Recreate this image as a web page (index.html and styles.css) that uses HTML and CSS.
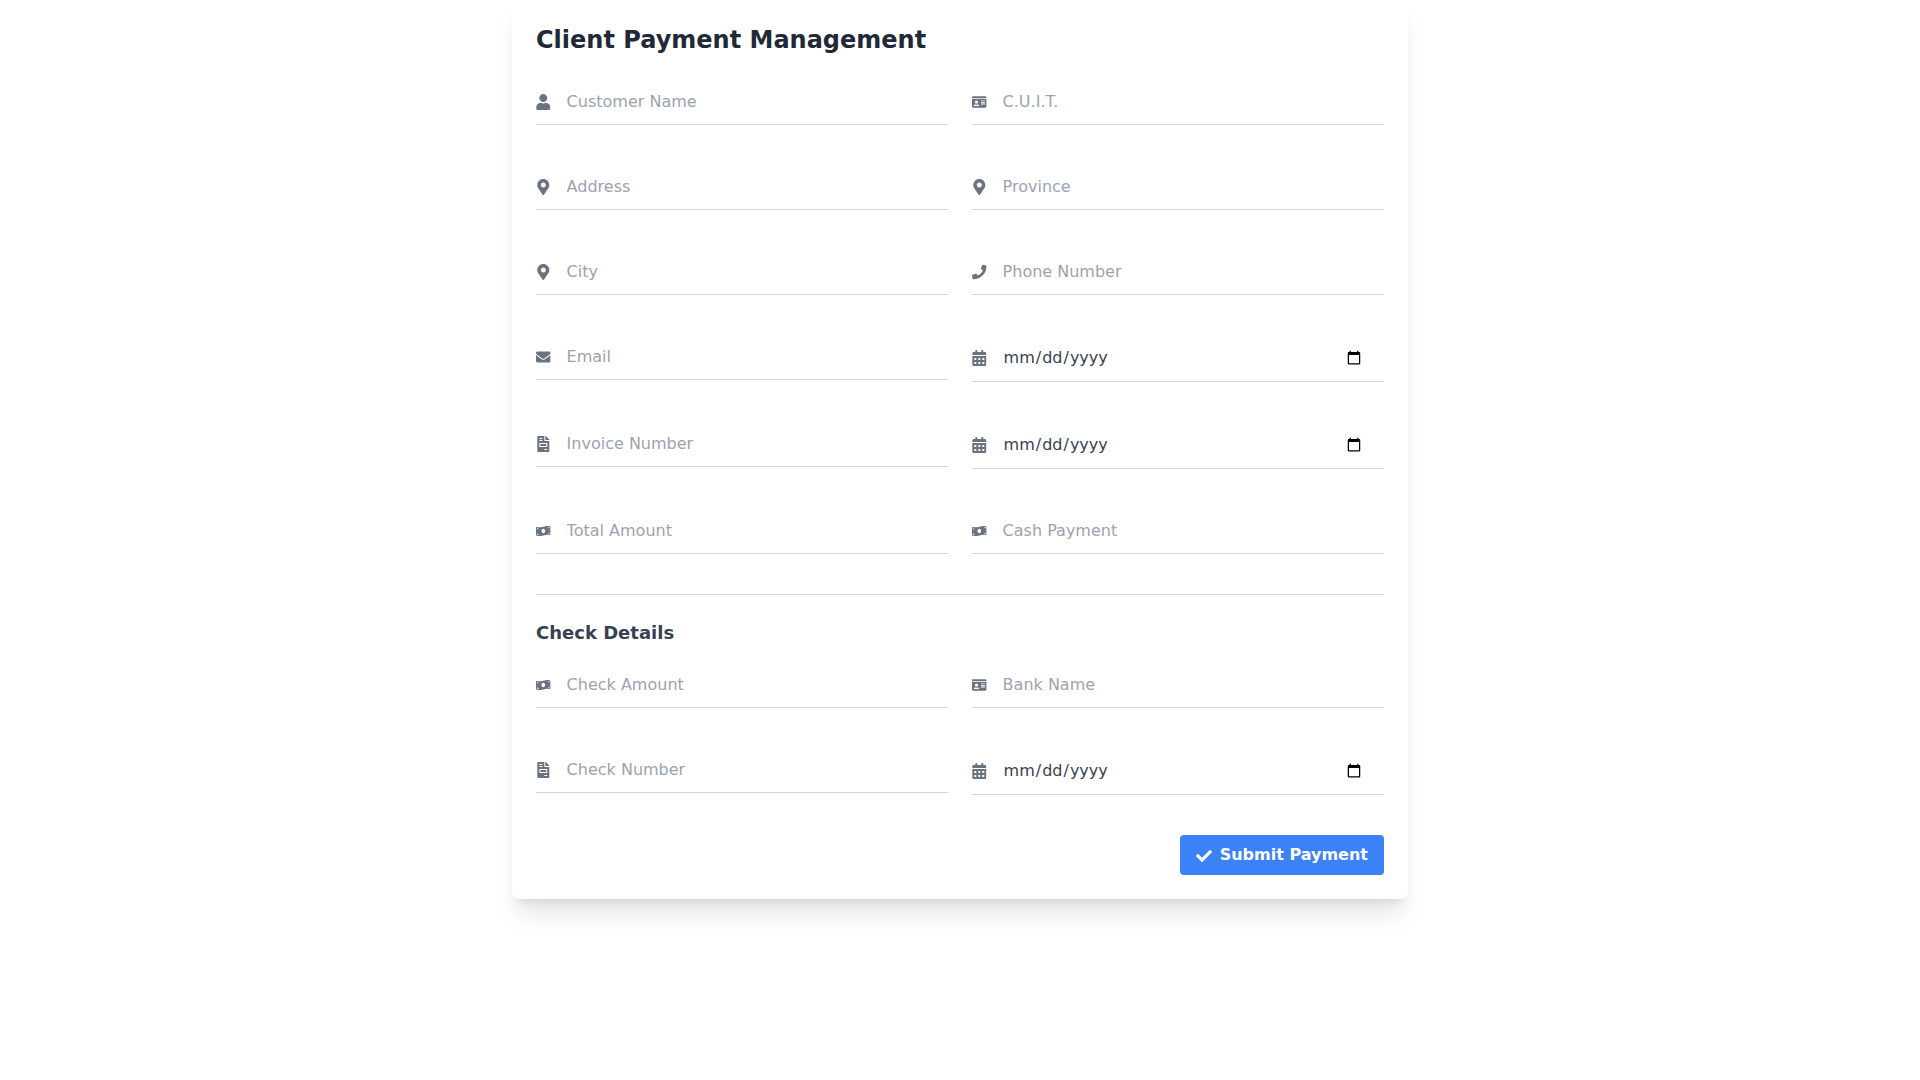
FILE: index.html
```
<!doctype html>
<html lang="en">
  <head>
    <meta charset="utf-8">
    <meta name="viewport" content="width=device-width, initial-scale=1">
    <title>Client Payment Management</title>
    <link rel="stylesheet" href="styles.css">
  </head>

  <body>
    <svg class="sprite" aria-hidden="true">
      <symbol id="user" viewBox="0 0 448 512"><path d="M224 256c70.7 0 128-57.3 128-128S294.7 0 224 0 96 57.3 96 128s57.3 128 128 128zm89.6 32h-16.7c-22.2 10.2-46.9 16-72.9 16s-50.6-5.8-72.9-16h-16.7C60.2 288 0 348.2 0 422.4V464c0 26.5 21.5 48 48 48h352c26.5 0 48-21.5 48-48v-41.6c0-74.2-60.2-134.4-134.4-134.4z"/></symbol>
      <symbol id="idCard" viewBox="0 0 576 512"><path d="M528 32H48C21.5 32 0 53.5 0 80v16h576V80c0-26.5-21.5-48-48-48zM0 432c0 26.5 21.5 48 48 48h480c26.5 0 48-21.5 48-48V128H0v304zm352-232c0-4.4 3.6-8 8-8h144c4.4 0 8 3.6 8 8v16c0 4.4-3.6 8-8 8H360c-4.4 0-8-3.6-8-8v-16zm0 64c0-4.4 3.6-8 8-8h144c4.4 0 8 3.6 8 8v16c0 4.4-3.6 8-8 8H360c-4.4 0-8-3.6-8-8v-16zm0 64c0-4.4 3.6-8 8-8h144c4.4 0 8 3.6 8 8v16c0 4.4-3.6 8-8 8H360c-4.4 0-8-3.6-8-8v-16zM176 192c35.3 0 64 28.7 64 64s-28.7 64-64 64-64-28.7-64-64 28.7-64 64-64zM67.1 396.2C75.5 370.5 99.6 352 128 352h8.2c12.3 5.1 25.7 8 39.8 8s27.6-2.9 39.8-8h8.2c28.4 0 52.5 18.5 60.9 44.2 3.2 9.9-5.2 19.8-15.6 19.8H82.7c-10.4 0-18.8-10-15.6-19.8z"/></symbol>
      <symbol id="marker" viewBox="0 0 384 512"><path d="M172.268 501.67C26.97 291.031 0 269.413 0 192 0 85.961 85.961 0 192 0s192 85.961 192 192c0 77.413-26.97 99.031-172.268 309.67-9.535 13.774-29.93 13.773-39.464 0zM192 272c44.183 0 80-35.817 80-80s-35.817-80-80-80-80 35.817-80 80 35.817 80 80 80z"/></symbol>
      <symbol id="phone" viewBox="0 0 512 512"><path d="M493.4 24.6l-104-24c-11.3-2.6-22.9 3.3-27.5 13.9l-48 112c-4.2 9.8-1.4 21.3 6.9 28l60.6 49.6c-36 76.7-98.9 140.5-177.2 177.2l-49.6-60.6c-6.8-8.3-18.2-11.1-28-6.9l-112 48C3.9 366.5-2 378.1.6 389.4l24 104C27.1 504.2 36.7 512 48 512c256.1 0 464-207.5 464-464 0-11.2-7.7-20.9-18.6-23.4z"/></symbol>
      <symbol id="envelope" viewBox="0 0 512 512"><path d="M502.3 190.8c3.9-3.1 9.7-.2 9.7 4.7V400c0 26.5-21.5 48-48 48H48c-26.5 0-48-21.5-48-48V195.6c0-5 5.7-7.8 9.7-4.7 22.4 17.4 52.1 39.5 154.1 113.6 21.1 15.4 56.7 47.8 92.2 47.6 35.7.3 72-32.8 92.3-47.6 102-74.1 131.6-96.3 154-113.7zM256 320c23.2.4 56.6-29.2 73.4-41.4 132.7-96.3 142.8-104.7 173.4-128.7 5.8-4.5 9.2-11.5 9.2-18.9v-19c0-26.5-21.5-48-48-48H48c-26.5 0-48 21.5-48 48v19c0 7.4 3.4 14.3 9.2 18.9 30.6 23.9 40.7 32.4 173.4 128.7 16.8 12.2 50.2 41.8 73.4 41.4z"/></symbol>
      <symbol id="calendar" viewBox="0 0 448 512"><path d="M0 464c0 26.5 21.5 48 48 48h352c26.5 0 48-21.5 48-48V192H0v272zm320-196c0-6.600 5.400-12 12-12h40c6.600 0 12 5.400 12 12v40c0 6.600-5.400 12-12 12h-40c-6.600 0-12-5.400-12-12v-40zm0 128c0-6.600 5.400-12 12-12h40c6.600 0 12 5.400 12 12v40c0 6.600-5.400 12-12 12h-40c-6.600 0-12-5.400-12-12v-40zM192 268c0-6.600 5.400-12 12-12h40c6.600 0 12 5.400 12 12v40c0 6.600-5.400 12-12 12h-40c-6.600 0-12-5.400-12-12v-40zm0 128c0-6.600 5.400-12 12-12h40c6.600 0 12 5.400 12 12v40c0 6.600-5.400 12-12 12h-40c-6.600 0-12-5.400-12-12v-40zM64 268c0-6.600 5.400-12 12-12h40c6.600 0 12 5.400 12 12v40c0 6.600-5.400 12-12 12H76c-6.600 0-12-5.400-12-12v-40zm0 128c0-6.600 5.400-12 12-12h40c6.600 0 12 5.400 12 12v40c0 6.600-5.400 12-12 12H76c-6.600 0-12-5.400-12-12v-40zM400 64h-48V16c0-8.800-7.200-16-16-16h-32c-8.800 0-16 7.200-16 16v48H160V16c0-8.800-7.200-16-16-16h-32c-8.800 0-16 7.200-16 16v48H48C21.500 64 0 85.500 0 112v48h448v-48c0-26.500-21.500-48-48-48z"/></symbol>
      <symbol id="invoice" viewBox="0 0 384 512"><path d="M288 256H96v64h192v-64zm89-151L279.100 7c-4.500-4.500-10.600-7-17-7H256v128h128v-6.100c0-6.300-2.500-12.400-7-16.900zm-153 31V0H24C10.700 0 0 10.700 0 24v464c0 13.300 10.700 24 24 24h336c13.300 0 24-10.700 24-24V160H248c-13.200 0-24-10.800-24-24zM64 72c0-4.420 3.580-8 8-8h80c4.420 0 8 3.580 8 8v16c0 4.420-3.580 8-8 8H72c-4.420 0-8-3.580-8-8V72zm0 64c0-4.420 3.580-8 8-8h80c4.420 0 8 3.580 8 8v16c0 4.420-3.580 8-8 8H72c-4.420 0-8-3.580-8-8v-16zm256 304c0 4.420-3.580 8-8 8h-80c-4.420 0-8-3.580-8-8v-16c0-4.420 3.580-8 8-8h80c4.420 0 8 3.580 8 8v16zm0-200v96c0 8.840-7.160 16-16 16H80c-8.840 0-16-7.160-16-16v-96c0-8.840 7.160-16 16-16h224c8.840 0 16 7.160 16 16z"/></symbol>
      <symbol id="money" viewBox="0 0 640 512"><path d="M621.16 54.46C582.37 38.19 543.55 32 504.75 32c-123.17-.01-246.33 62.34-369.5 62.34-30.89 0-61.76-3.92-92.65-13.72-3.47-1.1-6.95-1.62-10.35-1.62C15.04 79 0 92.32 0 110.81v317.26c0 12.63 7.23 24.6 18.84 29.46C57.63 473.81 96.45 480 135.25 480c123.17 0 246.34-62.35 369.51-62.35 30.89 0 61.76 3.92 92.65 13.72 3.47 1.1 6.95 1.62 10.35 1.62 17.21 0 32.25-13.32 32.25-31.81V83.93c-.01-12.64-7.24-24.6-18.85-29.47zM48 132.22c20.12 5.04 41.12 7.57 62.72 8.93C104.84 170.54 79 192.69 48 192.69v-60.47zm0 285v-47.78c34.37 0 62.18 27.27 63.71 61.4-22.53-1.81-43.59-6.31-63.71-13.62zM320 352c-44.19 0-80-42.99-80-96 0-53.02 35.82-96 80-96s80 42.98 80 96c0 53.03-35.83 96-80 96zm272 27.78c-17.52-4.39-35.71-6.85-54.32-8.44 5.87-26.08 27.5-45.88 54.32-49.28v57.72zm0-236.11c-30.89-3.91-54.86-29.7-55.81-61.55 19.54 2.17 38.09 6.23 55.81 12.66v48.89z"/></symbol>
      <symbol id="check" viewBox="0 0 512 512"><path d="M173.898 439.404l-166.400-166.400c-9.997-9.997-9.997-26.206 0-36.204l36.203-36.204c9.997-9.998 26.207-9.998 36.204 0L192 312.690 432.095 72.596c9.997-9.997 26.207-9.997 36.204 0l36.203 36.204c9.997 9.997 9.997 26.206 0 36.204l-294.400 294.401c-9.998 9.997-26.207 9.997-36.204-.001z"/></symbol>
    </svg>

    <form class="card">
      <h1>Client Payment Management</h1>

      <div class="fields">
        <label class="field">
          <svg class="icon"><use href="#user"/></svg>
          <input type="text" name="customerName" placeholder="Customer Name" aria-label="Customer Name">
        </label>
        <label class="field">
          <svg class="icon"><use href="#idCard"/></svg>
          <input type="text" name="cuit" placeholder="C.U.I.T." aria-label="C.U.I.T.">
        </label>
        <label class="field">
          <svg class="icon"><use href="#marker"/></svg>
          <input type="text" name="address" placeholder="Address" aria-label="Address">
        </label>
        <label class="field">
          <svg class="icon"><use href="#marker"/></svg>
          <input type="text" name="province" placeholder="Province" aria-label="Province">
        </label>
        <label class="field">
          <svg class="icon"><use href="#marker"/></svg>
          <input type="text" name="city" placeholder="City" aria-label="City">
        </label>
        <label class="field">
          <svg class="icon"><use href="#phone"/></svg>
          <input type="tel" name="phone" placeholder="Phone Number" aria-label="Phone Number">
        </label>
        <label class="field">
          <svg class="icon"><use href="#envelope"/></svg>
          <input type="email" name="email" placeholder="Email" aria-label="Email">
        </label>
        <label class="field">
          <svg class="icon"><use href="#calendar"/></svg>
          <input type="date" name="paymentDate" aria-label="Payment Date">
        </label>
        <label class="field">
          <svg class="icon"><use href="#invoice"/></svg>
          <input type="text" name="invoiceNumber" placeholder="Invoice Number" aria-label="Invoice Number">
        </label>
        <label class="field">
          <svg class="icon"><use href="#calendar"/></svg>
          <input type="date" name="invoiceDate" aria-label="Invoice Date">
        </label>
        <label class="field">
          <svg class="icon"><use href="#money"/></svg>
          <input type="text" name="totalAmount" placeholder="Total Amount" aria-label="Total Amount">
        </label>
        <label class="field">
          <svg class="icon"><use href="#money"/></svg>
          <input type="text" name="cashPayment" placeholder="Cash Payment" aria-label="Cash Payment">
        </label>
      </div>

      <hr>

      <h2>Check Details</h2>

      <div class="fields">
        <label class="field">
          <svg class="icon"><use href="#money"/></svg>
          <input type="text" name="checkAmount" placeholder="Check Amount" aria-label="Check Amount">
        </label>
        <label class="field">
          <svg class="icon"><use href="#idCard"/></svg>
          <input type="text" name="bankName" placeholder="Bank Name" aria-label="Bank Name">
        </label>
        <label class="field">
          <svg class="icon"><use href="#invoice"/></svg>
          <input type="text" name="checkNumber" placeholder="Check Number" aria-label="Check Number">
        </label>
        <label class="field">
          <svg class="icon"><use href="#calendar"/></svg>
          <input type="date" name="checkDate" aria-label="Check Date">
        </label>
      </div>

      <div class="actions">
        <button type="submit" class="submit"><svg class="icon"><use href="#check"/></svg>Submit Payment</button>
      </div>
    </form>
  </body>
</html>
```
FILE: styles.css
```
* {
  box-sizing: border-box;
}

body {
  min-height: 100vh;
  margin: 0;
  background-color: #fff;
  font-family: "DejaVu Sans", sans-serif;
  font-size: 16px;
  line-height: 24px;
}

.sprite {
  display: none;
}

.card {
  max-width: 896px;
  margin: 0 auto;
  padding: 24px;
  background-color: #fff;
  border-radius: 8px;
  box-shadow: 0 20px 25px -5px rgba(0, 0, 0, 0.1), 0 8px 10px -6px rgba(0, 0, 0, 0.1);
}

h1 {
  margin: 0 0 24px;
  font-size: 24px;
  line-height: 32px;
  color: #1f2937;
}

h2 {
  margin: 0 0 16px;
  font-size: 18px;
  line-height: 28px;
  color: #374151;
}

hr {
  margin: 24px 0;
  border: 0;
  border-top: 1px solid #d1d5db;
}

.fields {
  display: grid;
  grid-template-columns: 1fr 1fr;
  gap: 24px;
  align-items: start;
}

.field {
  display: flex;
  align-items: center;
  margin-bottom: 16px;
  padding: 8px 0;
  border-bottom: 1px solid #d1d5db;
}

.icon {
  width: 16px;
  height: 16px;
  margin-right: 8px;
  vertical-align: middle;
  fill: currentColor;
}

.field .icon {
  color: #6b7280;
}

.field input {
  width: 100%;
  margin: 0 12px 0 0;
  padding: 4px 8px;
  border: 0;
  outline: none;
  background: transparent;
  font: inherit;
  line-height: 20px;
  color: #374151;
}

.field input::placeholder {
  color: #9ca3af;
}

.actions {
  display: flex;
  justify-content: flex-end;
  margin-top: 24px;
}

.submit {
  padding: 8px 16px;
  border: 0;
  border-radius: 4px;
  background-color: #3b82f6;
  color: #fff;
  font: inherit;
  font-weight: 700;
  cursor: pointer;
}

.submit:hover {
  background-color: #1d4ed8;
}

@media (max-width: 767px) {
  .fields {
    grid-template-columns: 1fr;
  }
}
```
